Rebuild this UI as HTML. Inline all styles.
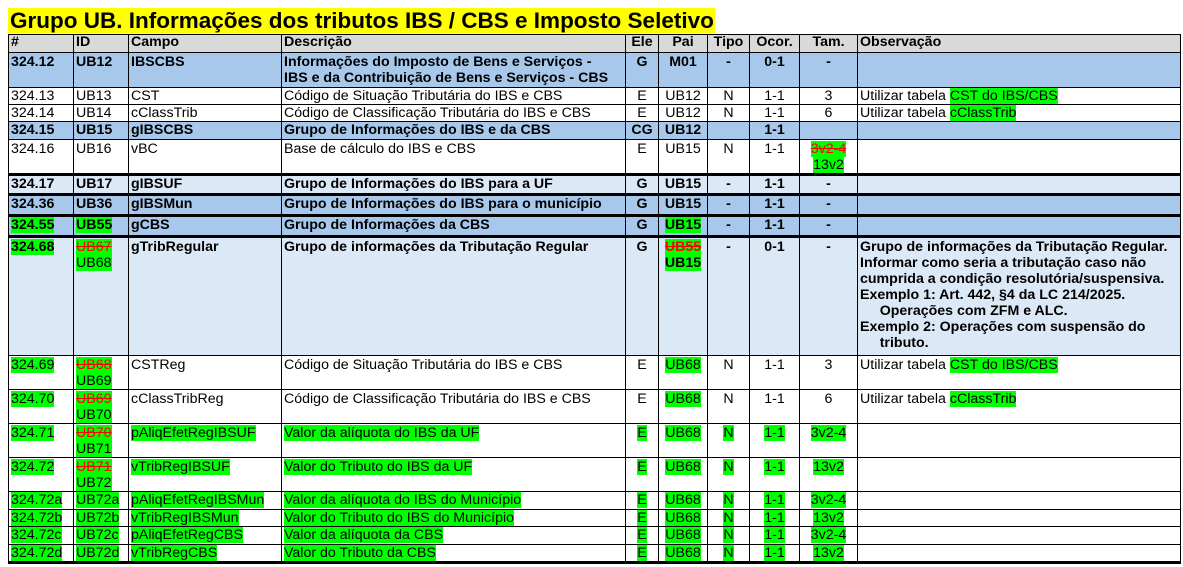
<!DOCTYPE html>
<html><head><meta charset="utf-8"><style>
body{margin:0;background:#fff;font-family:"Liberation Sans",Arial,sans-serif;}
.title{position:absolute;left:8px;top:8px;height:25px;width:707px;background:#ffff00;font-weight:bold;font-size:22.5px;line-height:26px;padding-left:2px;box-sizing:border-box;white-space:nowrap;}
table{position:absolute;left:8px;top:34px;border-collapse:collapse;table-layout:fixed;font-size:14.2px;line-height:15px;}
td{border:1px solid #000;padding:1px 1px 0 2px;vertical-align:top;overflow:hidden;white-space:nowrap;}
td.c{text-align:center;padding:1px 0 0 0}
tr.h td{background:#d9d9d9;font-weight:bold;padding-top:0}
tr.b td{background:#a7c8ea;font-weight:bold;}
tr.l td{background:#dbe8f6;font-weight:bold;}
.g{background:#00ff00}
.s{color:#ff0000;text-decoration:line-through;background:#00ff00}
tr.tk td{border-top:3px solid #000}
td.obs{white-space:normal;line-height:16.3px}
tr.last td{border-bottom:3px solid #000}
tr.two td{line-height:16px}
</style></head><body>
<div class="title">Grupo UB. Informações dos tributos IBS / CBS e Imposto Seletivo</div>
<table>
<colgroup><col style="width:65px"><col style="width:55px"><col style="width:153px"><col style="width:344px"><col style="width:33px"><col style="width:49px"><col style="width:42px"><col style="width:50px"><col style="width:58px"><col style="width:323px"></colgroup>
<tr class="h" style="height:18px"><td>#</td><td>ID</td><td>Campo</td><td>Descrição</td><td class="c">Ele</td><td class="c">Pai</td><td class="c">Tipo</td><td class="c">Ocor.</td><td class="c">Tam.</td><td>Observação</td></tr>
<tr class="b two" style="height:35px"><td>324.12</td><td>UB12</td><td>IBSCBS</td><td>Informações do Imposto de Bens e Serviços -<br>IBS e da Contribuição de Bens e Serviços - CBS</td><td class="c">G</td><td class="c">M01</td><td class="c">-</td><td class="c">0-1</td><td class="c">-</td><td></td></tr>
<tr style="height:17px"><td>324.13</td><td>UB13</td><td>CST</td><td>Código de Situação Tributária do IBS e CBS</td><td class="c">E</td><td class="c">UB12</td><td class="c">N</td><td class="c">1-1</td><td class="c">3</td><td>Utilizar tabela <span class="g">CST do IBS/CBS</span></td></tr>
<tr style="height:17px"><td>324.14</td><td>UB14</td><td>cClassTrib</td><td>Código de Classificação Tributária do IBS e CBS</td><td class="c">E</td><td class="c">UB12</td><td class="c">N</td><td class="c">1-1</td><td class="c">6</td><td>Utilizar tabela <span class="g">cClassTrib</span></td></tr>
<tr class="b" style="height:18px"><td>324.15</td><td>UB15</td><td>gIBSCBS</td><td>Grupo de Informações do IBS e da CBS</td><td class="c">CG</td><td class="c">UB12</td><td class="c"></td><td class="c">1-1</td><td class="c"></td><td></td></tr>
<tr class="two" style="height:35px"><td>324.16</td><td>UB16</td><td>vBC</td><td>Base de cálculo do IBS e CBS</td><td class="c">E</td><td class="c">UB15</td><td class="c">N</td><td class="c">1-1</td><td class="c"><span class="s">3v2-4</span><br><span class="g">13v2</span></td><td></td></tr>
<tr class="l tk" style="height:20px"><td>324.17</td><td>UB17</td><td>gIBSUF</td><td>Grupo de Informações do IBS para a UF</td><td class="c">G</td><td class="c">UB15</td><td class="c">-</td><td class="c">1-1</td><td class="c">-</td><td></td></tr>
<tr class="b tk" style="height:21px"><td>324.36</td><td>UB36</td><td>gIBSMun</td><td>Grupo de Informações do IBS para o município</td><td class="c">G</td><td class="c">UB15</td><td class="c">-</td><td class="c">1-1</td><td class="c">-</td><td></td></tr>
<tr class="b tk" style="height:21px"><td><span class="g">324.55</span></td><td><span class="g">UB55</span></td><td>gCBS</td><td>Grupo de Informações da CBS</td><td class="c">G</td><td class="c"><span class="g">UB15</span></td><td class="c">-</td><td class="c">1-1</td><td class="c">-</td><td></td></tr>
<tr class="l tk two" style="height:119px"><td><span class="g">324.68</span></td><td style="font-weight:normal"><span class="s">UB67</span><br><span class="g">UB68</span></td><td>gTribRegular</td><td>Grupo de informações da Tributação Regular</td><td class="c">G</td><td class="c"><span class="s">UB55</span><br><span class="g">UB15</span></td><td class="c">-</td><td class="c">0-1</td><td class="c">-</td><td class="obs">Grupo de informações da Tributação Regular.<br>Informar como seria a tributação caso não<br>cumprida a condição resolutória/suspensiva.<br>Exemplo 1: Art. 442, §4 da LC 214/2025.<br>&nbsp;&nbsp;&nbsp;&nbsp;&nbsp;Operações com ZFM e ALC.<br>Exemplo 2: Operações com suspensão do<br>&nbsp;&nbsp;&nbsp;&nbsp;&nbsp;tributo.</td></tr>
<tr class="two" style="height:34px"><td><span class="g">324.69</span></td><td><span class="s">UB68</span><br><span class="g">UB69</span></td><td>CSTReg</td><td>Código de Situação Tributária do IBS e CBS</td><td class="c">E</td><td class="c"><span class="g">UB68</span></td><td class="c">N</td><td class="c">1-1</td><td class="c">3</td><td>Utilizar tabela <span class="g">CST do IBS/CBS</span></td></tr>
<tr class="two" style="height:34px"><td><span class="g">324.70</span></td><td><span class="s">UB69</span><br><span class="g">UB70</span></td><td>cClassTribReg</td><td>Código de Classificação Tributária do IBS e CBS</td><td class="c">E</td><td class="c"><span class="g">UB68</span></td><td class="c">N</td><td class="c">1-1</td><td class="c">6</td><td>Utilizar tabela <span class="g">cClassTrib</span></td></tr>
<tr class="two" style="height:34px"><td><span class="g">324.71</span></td><td><span class="s">UB70</span><br><span class="g">UB71</span></td><td><span class="g">pAliqEfetRegIBSUF</span></td><td><span class="g">Valor da alíquota do IBS da UF</span></td><td class="c"><span class="g">E</span></td><td class="c"><span class="g">UB68</span></td><td class="c"><span class="g">N</span></td><td class="c"><span class="g">1-1</span></td><td class="c"><span class="g">3v2-4</span></td><td></td></tr>
<tr class="two" style="height:34px"><td><span class="g">324.72</span></td><td><span class="s">UB71</span><br><span class="g">UB72</span></td><td><span class="g">vTribRegIBSUF</span></td><td><span class="g">Valor do Tributo do IBS da UF</span></td><td class="c"><span class="g">E</span></td><td class="c"><span class="g">UB68</span></td><td class="c"><span class="g">N</span></td><td class="c"><span class="g">1-1</span></td><td class="c"><span class="g">13v2</span></td><td></td></tr>
<tr style="height:18px"><td><span class="g">324.72a</span></td><td><span class="g">UB72a</span></td><td><span class="g">pAliqEfetRegIBSMun</span></td><td><span class="g">Valor da alíquota do IBS do Município</span></td><td class="c"><span class="g">E</span></td><td class="c"><span class="g">UB68</span></td><td class="c"><span class="g">N</span></td><td class="c"><span class="g">1-1</span></td><td class="c"><span class="g">3v2-4</span></td><td></td></tr>
<tr style="height:17px"><td><span class="g">324.72b</span></td><td><span class="g">UB72b</span></td><td><span class="g">vTribRegIBSMun</span></td><td><span class="g">Valor do Tributo do IBS do Município</span></td><td class="c"><span class="g">E</span></td><td class="c"><span class="g">UB68</span></td><td class="c"><span class="g">N</span></td><td class="c"><span class="g">1-1</span></td><td class="c"><span class="g">13v2</span></td><td></td></tr>
<tr style="height:18px"><td><span class="g">324.72c</span></td><td><span class="g">UB72c</span></td><td><span class="g">pAliqEfetRegCBS</span></td><td><span class="g">Valor da alíquota da CBS</span></td><td class="c"><span class="g">E</span></td><td class="c"><span class="g">UB68</span></td><td class="c"><span class="g">N</span></td><td class="c"><span class="g">1-1</span></td><td class="c"><span class="g">3v2-4</span></td><td></td></tr>
<tr class="last" style="height:17px"><td><span class="g">324.72d</span></td><td><span class="g">UB72d</span></td><td><span class="g">vTribRegCBS</span></td><td><span class="g">Valor do Tributo da CBS</span></td><td class="c"><span class="g">E</span></td><td class="c"><span class="g">UB68</span></td><td class="c"><span class="g">N</span></td><td class="c"><span class="g">1-1</span></td><td class="c"><span class="g">13v2</span></td><td></td></tr>
</table>
</body></html>
